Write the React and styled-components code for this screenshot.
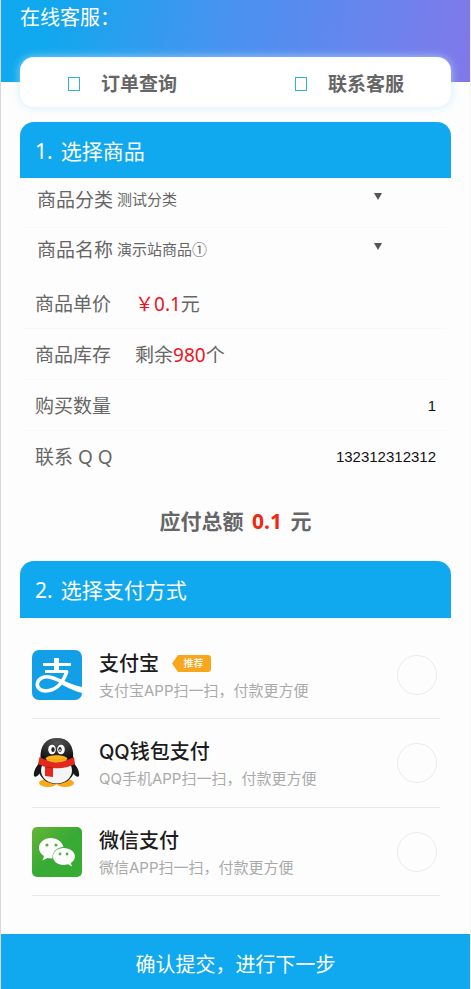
import React from "react";
import styled, { createGlobalStyle } from "styled-components";

const GlobalStyle = createGlobalStyle`
  *, *::before, *::after { box-sizing: border-box; }
  body {
    margin: 0;
    background: #fdfdfd;
    color: #666;
    font-family: "Noto Sans", "Noto Sans CJK SC", sans-serif;
  }
`;

const Page = styled.form`
  display: flex;
  flex-direction: column;
  min-height: 100vh;
  border-left: 1px solid #d8d8d8;
  border-right: 1px solid #f4f4f4;
`;

const Banner = styled.header`
  height: 82px;
  padding: 0 19px;
  background: linear-gradient(100deg, #10a8ee 10%, #4594f0 45%, #8078ea 100%);
  color: #fff;
  font-size: 20px;
  line-height: 36px;
`;

const QuickLinks = styled.nav`
  display: flex;
  align-items: center;
  justify-content: space-between;
  height: 50px;
  margin: -25px 19px 15px;
  padding: 4px 47px 0 48px;
  border-radius: 14px;
  background: #fff;
  box-shadow: 0 0 10px rgba(190, 232, 255, 0.7);
`;

const QuickLink = styled.a`
  display: flex;
  align-items: center;
  gap: 21px;
  color: #666;
  font-size: 19px;
  font-weight: 700;
  line-height: 28px;
  text-decoration: none;

  &::before {
    content: "";
    width: 12px;
    height: 14px;
    border: 1px solid #2bb3dc;
  }
`;

const Section = styled.section`
  margin: 0 19px;
`;

const SectionTitle = styled.h2`
  display: flex;
  gap: 8px;
  margin: 0;
  padding: 2px 15px 0;
  border-radius: 14px 14px 0 0;
  background: #10a8ee;
  color: #fff;
  font-size: 21px;
  font-weight: 400;
  line-height: ${(p) => p.$height - 2}px;
`;

const Row = styled.div`
  display: flex;
  align-items: center;
  height: ${(p) => (p.$picker ? 50 : 51)}px;
  margin: 0 4px;
  padding: ${(p) => (p.$picker ? "0 63px 8px 13px" : "0 11px")};
  border-bottom: 1px solid ${(p) => (p.$last ? "transparent" : "#f7f7f7")};
  font-size: 19px;
`;

const Label = styled.label`
  flex: none;
  white-space: pre;
`;

const Value = styled.span`
  margin-left: 24px;
`;

const Price = styled.span`
  color: #f0121e;
`;

const Picker = styled.div`
  display: grid;
  flex: 1;
  align-items: center;
  margin-left: 4px;

  & > * { grid-area: 1 / 1; }
  & > svg { justify-self: end; margin: 0 2px 4px 0; pointer-events: none; }
`;

const Select = styled.select`
  width: 100%;
  padding: 0;
  border: 0;
  outline: 0;
  appearance: none;
  background: transparent;
  color: #666;
  font-family: inherit;
  font-size: 15px;
  line-height: 24px;
`;

const TextInput = styled.input`
  flex: 1;
  min-width: 0;
  padding: 0;
  border: 0;
  outline: 0;
  background: transparent;
  color: #111;
  font-family: "Liberation Sans", sans-serif;
  font-size: 15px;
  text-align: right;
`;

const Total = styled.p`
  margin: 0;
  font-size: 21px;
  font-weight: 700;
  line-height: 79px;
  text-align: center;

  strong { margin: 0 3px; color: #f0280f; font-weight: 700; }
`;

const Methods = styled.div`
  display: flex;
  flex-direction: column;
  padding: 13px 11px 0 12px;
`;

const Method = styled.label`
  display: flex;
  align-items: center;
  gap: 17px;
  height: ${(p) => p.$height}px;
  padding: 0 3px 0 0;
  border-bottom: 1px solid #e8e8e8;

  & > svg { flex: none; }
`;

const MethodText = styled.span`
  display: flex;
  flex: 1;
  flex-direction: column;
  gap: 2px;
  padding-top: 2px;
`;

const MethodName = styled.span`
  display: flex;
  align-items: center;
  gap: 13px;
  color: #1c1c1c;
  font-family: Inter, "Noto Sans CJK SC", sans-serif;
  font-size: 20px;
  font-weight: 500;
  line-height: 28px;
`;

const MethodHint = styled.span`
  color: #aaa;
  font-family: Inter, "Noto Sans CJK SC", sans-serif;
  font-size: 15px;
  line-height: 22px;
  white-space: nowrap;
`;

const Badge = styled.span`
  width: 39px;
  padding-left: 4px;
  border-radius: 3px;
  background: #f8a61c;
  clip-path: polygon(0 50%, 6px 0, 100% 0, 100% 100%, 6px 100%);
  color: #fff;
  font-size: 10px;
  line-height: 17px;
  text-align: center;
`;

const Radio = styled.input`
  width: 40px;
  height: 40px;
  margin: 0;
  border: 1px solid #ebebeb;
  border-radius: 50%;
  appearance: none;

  &:checked { border: 12px solid #10a8ee; }
`;

const Submit = styled.button`
  margin-top: auto;
  padding: 7px 0 0;
  border: 0;
  background: #10a8ee;
  color: #fff;
  font-family: inherit;
  font-size: 20px;
  line-height: 48px;
`;

const Arrow = () => (
  <svg width="8" height="7" viewBox="0 0 8 7" aria-hidden="true">
    <path d="M0 0h8L4 7z" fill="#555" />
  </svg>
);

const AlipayIcon = () => (
  <svg width="50" height="50" viewBox="0 0 50 50" aria-hidden="true">
    <rect width="50" height="50" rx="7" fill="#139fe8" />
    <g fill="none" stroke="#fff">
      <path d="M24.500 8v12" strokeWidth="5" />
      <path d="M11 14.500h28M13 21.500h23" strokeWidth="2.800" />
      <path
        d="M35 21c-3 9-9 18-18 19.500C9 42 4.500 38 5.500 33c1-5 7-7.500 14-5.500C28 30 37 36 50 40"
        strokeWidth="3.600"
      />
    </g>
    <path d="M29 30c7 3 14 5.500 21 7v6c-8-2-16-6-23-10z" fill="#fff" />
  </svg>
);

const QQIcon = () => (
  <svg width="50" height="50" viewBox="0 0 50 50" aria-hidden="true">
    <defs>
      <radialGradient id="qqHead" cx="50%" cy="20%" r="80%">
        <stop offset="0" stopColor="#555" />
        <stop offset="1" stopColor="#111" />
      </radialGradient>
    </defs>
    <ellipse cx="16" cy="45" rx="9" ry="4" fill="#f9a818" />
    <ellipse cx="33" cy="45" rx="9" ry="4" fill="#f9a818" />
    <path d="M9 23C4 28 1 34 2 38c1 2 4 0 6-3zM40 23c5 5 8 11 7 15-1 2-4 0-6-3z" fill="#181818" />
    <ellipse cx="24.500" cy="30.500" rx="18" ry="15.500" fill="#181818" />
    <ellipse cx="24.500" cy="32.500" rx="15.500" ry="13" fill="#f4f4f4" />
    <path d="M8.500 22C7.500 7 14 0 25 0s17.500 7 16 22z" fill="url(#qqHead)" />
    <ellipse cx="20" cy="11.500" rx="3.800" ry="4.800" fill="#fff" />
    <ellipse cx="29" cy="11.500" rx="3.800" ry="4.800" fill="#fff" />
    <ellipse cx="21" cy="11.500" rx="1.700" ry="2.500" fill="#222" />
    <ellipse cx="28" cy="11.500" rx="1.700" ry="2.500" fill="#222" />
    <ellipse cx="28" cy="12.300" rx=".6" ry="1.200" fill="#fff" />
    <path d="M7.500 19c11 6 23 6 34.500 0l1 7c-8 4-15 5-22 4v9l-8-1v-9l-7-3z" fill="#e5281d" />
    <path d="M14 29l7 1" stroke="#ae1813" strokeWidth="1" />
    <path d="M13.500 20.500c2-4 19-4.500 22 0-3 5-18 5.500-22 0z" fill="#fcb31d" />
    <path d="M16 21c6 1.500 12 1.500 17 0" fill="none" stroke="#e8970f" strokeWidth=".6" />
  </svg>
);

const WechatIcon = () => (
  <svg width="50" height="50" viewBox="0 0 50 50" aria-hidden="true">
    <defs>
      <linearGradient id="wechatTile" x1="0" y1="0" x2="1" y2="1">
        <stop offset="0" stopColor="#65b536" />
        <stop offset=".5" stopColor="#37aa35" />
        <stop offset="1" stopColor="#37ad32" />
      </linearGradient>
    </defs>
    <rect width="50" height="50" rx="5" fill="url(#wechatTile)" />
    <path
      d="M19 11C12 11 7 15.500 7 21c0 3.500 2 6 5 8l-1.500 4.500L15.500 31c1.500.4 3 .5 5 .4C20 24 26 20 31.500 20 30 14.500 25 11 19 11z"
      fill="#fff"
    />
    <path
      d="M31.500 21C25.500 21 21 25 21 29.500S25.500 38 31.500 38c1.500 0 3-.2 4.300-.7L40 39.500 38.800 36c2.400-1.500 4.200-4 4.200-6.500 0-4.500-5-8.500-11.500-8.500z"
      fill="#fff"
    />
    <g fill="#5aae43">
      <circle cx="15" cy="18" r="1.600" />
      <circle cx="24" cy="18" r="1.600" />
      <circle cx="28" cy="27" r="1.400" />
      <circle cx="35" cy="27" r="1.400" />
    </g>
  </svg>
);

const methods = [
  { id: "alipay", name: "支付宝", hint: "支付宝APP扫一扫，付款更方便", Icon: AlipayIcon, badge: "推荐", height: 88 },
  { id: "qqpay", name: "QQ钱包支付", hint: "QQ手机APP扫一扫，付款更方便", Icon: QQIcon, height: 89 },
  { id: "wxpay", name: "微信支付", hint: "微信APP扫一扫，付款更方便", Icon: WechatIcon, height: 88 },
];

export default function App() {
  return (
    <>
      <GlobalStyle />
      <Page onSubmit={(e) => e.preventDefault()}>
        <Banner>在线客服：</Banner>
        <QuickLinks>
          <QuickLink href="#orders">订单查询</QuickLink>
          <QuickLink href="#service">联系客服</QuickLink>
        </QuickLinks>

        <Section>
          <SectionTitle $height={56}><span>1.</span> <span>选择商品</span></SectionTitle>
          <Row $picker>
            <Label htmlFor="category">商品分类</Label>
            <Picker>
              <Select id="category">
                <option>测试分类</option>
              </Select>
              <Arrow />
            </Picker>
          </Row>
          <Row $picker $last>
            <Label htmlFor="product">商品名称</Label>
            <Picker>
              <Select id="product">
                <option>演示站商品①</option>
              </Select>
              <Arrow />
            </Picker>
          </Row>
          <Row>
            <span>商品单价</span>
            <Value><Price>￥0.1</Price>元</Value>
          </Row>
          <Row>
            <span>商品库存</span>
            <Value>剩余<Price>980</Price>个</Value>
          </Row>
          <Row>
            <Label htmlFor="quantity">购买数量</Label>
            <TextInput id="quantity" defaultValue="1" />
          </Row>
          <Row $last>
            <Label htmlFor="contact">联系 Q Q</Label>
            <TextInput id="contact" defaultValue="132312312312" />
          </Row>
          <Total>应付总额 <strong>0.1</strong> 元</Total>
        </Section>

        <Section>
          <SectionTitle $height={57}><span>2.</span> <span>选择支付方式</span></SectionTitle>
          <Methods>
            {methods.map(({ id, name, hint, Icon, badge, height }) => (
              <Method key={id} $height={height}>
                <Icon />
                <MethodText>
                  <MethodName>
                    {name}
                    {badge && <Badge>{badge}</Badge>}
                  </MethodName>
                  <MethodHint>{hint}</MethodHint>
                </MethodText>
                <Radio type="radio" name="payment" value={id} />
              </Method>
            ))}
          </Methods>
        </Section>

        <Submit type="submit">确认提交，进行下一步</Submit>
      </Page>
    </>
  );
}
